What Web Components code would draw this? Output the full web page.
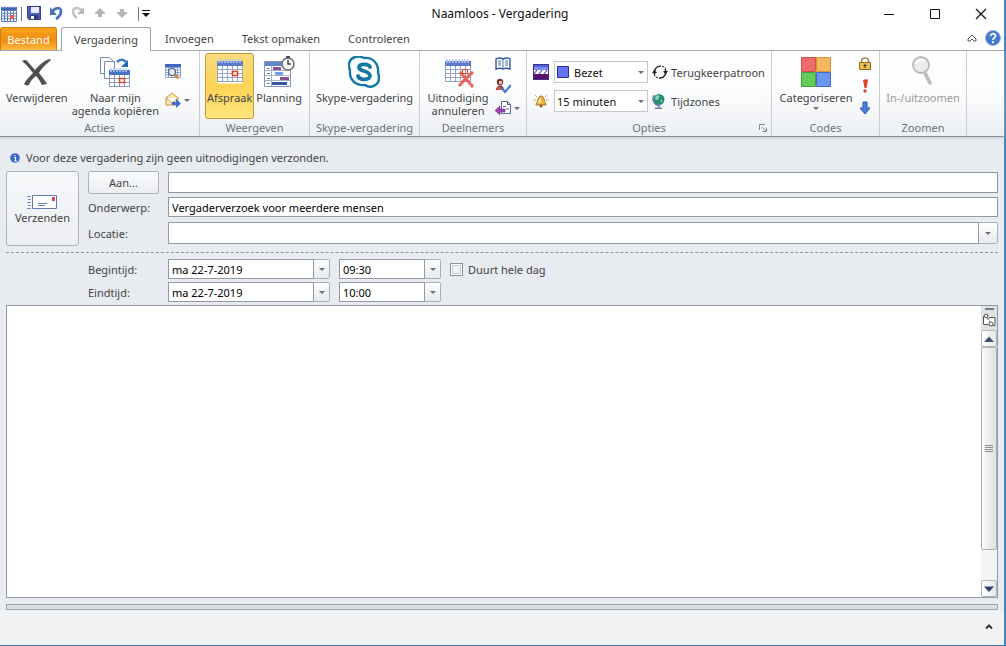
<!DOCTYPE html>
<html lang="nl">
<head>
<meta charset="utf-8">
<title>Naamloos - Vergadering</title>
<style>
html,body{margin:0;height:100%}
body{font:11px/13px "Noto Sans","Open Sans",sans-serif;color:#444;background:#e8ebf0}
</style>
</head>
<body>
<meeting-window></meeting-window>
<script>
const define = (tag, css, html, after) => {
  const t = document.createElement('template');
  t.innerHTML = `<style>*{box-sizing:border-box}button,input,select,textarea{font:inherit;color:inherit;margin:0}button{border:0;background:none;padding:0}${css}</style>${html}`;
  customElements.define(tag, class extends HTMLElement {
    constructor() {
      super();
      this.attachShadow({mode: 'open'}).append(t.content.cloneNode(true));
    }
    connectedCallback() { if (after) after.call(this, this.shadowRoot); }
  });
};

const grid = (x, y, w, h, cols, rows, c) => {
  let d = '';
  for (let i = 0; i <= cols; i++) d += `M${x + w * i / cols} ${y}v${h}`;
  for (let i = 0; i <= rows; i++) d += `M${x} ${y + h * i / rows}h${w}`;
  return `<path d="${d}" stroke="${c}" fill="none"/>`;
};
const calendar = `<g transform="translate(0 2)"><rect x="3.500" y="5.500" width="25" height="20" fill="#fff"/>${grid(3.5, 7.5, 25, 16, 5, 4, '#93a3cb')}<path d="M3 3h26v5H3z" fill="#5c7cca"/><path d="M5 1v4m3-4v4m3-4v4m3-4v4m3-4v4m3-4v4m3-4v4m3-4v4" stroke="#b7c8f3" stroke-width="1.500"/></g>`;
const icons = {
  app: [16, `<path d="M.5 2.500h15v13H.5z" fill="#fff"/>${grid(.5, 4.500, 15, 11, 5, 4, '#5f7db8')}<path d="M0 1h16v3H0z" fill="#3f65ae"/><path d="M2 0v2m3-2v2m3-2v2m3-2v2m3-2v2" stroke="#b9cdf3"/><path d="M9 9h4v4H9z" fill="#e66049"/>`],
  save: [16, `<path d="M1 1h14v14H3l-2-2z" fill="#4d5cb4"/><path d="M5 1h8v7H5z" fill="#e8eefb"/><path d="M4 10h8v5H4z" fill="#2f3a7a"/><path d="M5 11h3v4H5z" fill="#fff"/><path d="M1.500 1.500h13v13h-11l-2-2z" fill="none" stroke="#35428f"/>`],
  undo: [16, `<path d="M4 7C7 2 13 2 13 6c0 3-2 6-5 8" fill="none" stroke="#4a73bb" stroke-width="2.800"/><path d="M2 2v8h7z" fill="#4a73bb"/>`],
  redo: [16, `<path d="M12 6C9 2 3 2 3 6c0 3 1 5 4 7" fill="none" stroke="#c4c4c4" stroke-width="2.600"/><path d="M14 2v7H7z" fill="#b8b8b8"/>`],
  up: [16, `<path d="M8 3l6 6h-4v3H6V9H2z" fill="#b4b4b4"/>`],
  down: [16, `<path d="M8 13l6-6h-4V4H6v3H2z" fill="#b4b4b4"/>`],
  more: [10, `<path d="M1 2.500h8" stroke="#111"/><path d="M1 5h8L5 9z" fill="#111"/>`],
  minimize: [12, `<path d="M1 6.500h10" stroke="#111"/>`],
  maximize: [12, `<path d="M1.500 1.500h9v9h-9z" fill="none" stroke="#111"/>`],
  close: [12, `<path d="M1 1l10 10M11 1L1 11" stroke="#111" stroke-width="1.200"/>`],
  collapse: [10, `<path d="M1 5l4-4 4 4v2H7L5 5 3 7H1z" fill="#fff" stroke="#555"/>`],
  help: [16, `<circle cx="8" cy="8" r="7.500" fill="#4478cc" stroke="#8fb2ea"/><path d="M5.500 6.200C5.500 2.800 10.600 3 10.500 6c0 1.800-2.500 1.800-2.500 4" stroke="#fff" stroke-width="1.700" fill="none"/><circle cx="8" cy="12.200" r="1.100" fill="#fff"/>`],
  info: [10, `<circle cx="5" cy="5" r="4.800" fill="#3c6cc8"/><path d="M4 4.500h1.500V8M4 8h3M5 2v1.300" stroke="#fff" fill="none"/>`],
  arrow: [8, `<path d="M1 3h6L4 6z" fill="#6c6f75"/>`],
  remove: [32, `<path d="M1 5c3-2 5-1 6 1l7 8C19 8 24 4 29 3c1 0 1 1 0 2-5 4-9 8-11 12 3 4 6 7 8 11l-5 1c-2-4-4-7-6-9-4 3-6 6-7 9-2 1-4 0-5-1 2-4 6-8 9-11C8 12 5 8 1 5z" fill="#505053"/>`],
  copy: [32, `<path d="M1.500 1.500h9l3 3v13h-12z" fill="#fff" stroke="#7787b4"/><path d="M5.500 5.500h10v17h-10z" fill="#fff" stroke="#7787b4"/><path d="M18 6c3-3 7-3 9 0" fill="none" stroke="#3f78c6" stroke-width="2.500"/><path d="M29 4v7h-7z" fill="#2d62b4"/><path d="M10.500 14.500h20v17h-20z" fill="#fff"/>${grid(10.5, 18.5, 20, 12, 4, 3, '#8797c8')}<path d="M10 14h21v5H10z" fill="#4674c9"/><path d="M12 12v4m3-4v4m3-4v4m3-4v4m3-4v4m3-4v4" stroke="#b4cbf5" stroke-width="1.500"/><path d="M20.500 22.500h5v4h-5z" fill="#fff" stroke="#d94b2b" stroke-width="1.500"/>`],
  lookup: [16, `<path d="M.5 1.500h15v13H.5z" fill="#fff"/>${grid(.5, 4.500, 15, 10, 5, 4, '#8ba0d0')}<path d="M0 1h16v3H0z" fill="#3f66b8"/><circle cx="7" cy="9" r="3.500" fill="#d9ecfb" stroke="#4a5f86" stroke-width="1.200"/><path d="M9.500 11.500l4 4" stroke="#c98a3b" stroke-width="2.500"/>`],
  forward: [16, `<path d="M1 6l6-5 6 5v7H1z" fill="#fbe9b0" stroke="#c09545"/><path d="M3 6h8v3L7 11 3 9z" fill="#fff"/><path d="M1 6l6 5 6-5" fill="none" stroke="#c09545"/><path d="M7 10h4V7l5 4.500-5 4.500v-3H7z" fill="#3e6fd0"/>`],
  appointment: [32, calendar + `<path d="M18.500 15.500h5v4h-5z" fill="#fff" stroke="#e0401f" stroke-width="1.600"/>`],
  planning: [32, `<path d="M1.500 5.500h26v25h-26z" fill="#fff" stroke="#8796b8"/><path d="M2 6h25v4H2z" fill="#6183c8"/><path d="M2 14.500h25M2 19.500h25M2 24.500h25M8.500 10v20" stroke="#a4b2d0"/><path d="M4 12.500h3m-3 5h3m-3 5h3m-3 5h3" stroke="#6b82b8"/><path d="M10 11h8v3h-8zM17 21h9v3h-9z" fill="#8c4d96"/><path d="M12 16h8v3h-8z" fill="#6fa0e5"/><path d="M9 26h15v3H9z" fill="#3858a4"/><circle cx="25" cy="8" r="6" fill="#f7f8fa" stroke="#6c6e74" stroke-width="1.500"/><path d="M23 .8h4M25 1v2M25 4v4h3" stroke="#44464a" stroke-width="1.500" fill="none"/>`],
  skype: [32, `<path d="M16 2C10-1 2 1 1 8c-.3 2 0 4 1 6-1 10 6 16 15 15 6 4 14 0 14-7 0-2 0-3-1-5C31 8 25 1 16 2z" fill="#fff" stroke="#1478a5" stroke-width="2.400"/><path d="M22 11c-1-3-10-4-11 0-1 5 11 3 11 9-1 5-11 4-12 0" fill="none" stroke="#1478a5" stroke-width="3.800" stroke-linecap="round"/>`],
  cancel: [32, calendar + `<path d="M18 16l13 15M31 16c-5 4-10 9-14 14" stroke="#e85a48" stroke-width="3" fill="none" opacity=".9"/><path d="M20.500 13.500h5v4h-5z" fill="none" stroke="#e0401f"/>`],
  book: [16, `<path d="M1 3c3-2 5-1 7 0 2-1 4-2 7 0v10c-3-1-5-1-7 0-2-1-4-1-7 0z" fill="#fff" stroke="#35589a" stroke-width="1.400"/><path d="M8 3v10M3 5h3M3 7h3M3 9h3M10 5h3M10 7h3M10 9h3" stroke="#4a78b8"/>`],
  check: [16, `<circle cx="5" cy="4" r="3.200" fill="#7c323c"/><path d="M1 12c0-6 8-6 8 0z" fill="#63404f"/><path d="M4 3h3v3H4z" fill="#e7bf9e"/><path d="M2 9h4v3H2z" fill="#e04d43"/><path d="M7 10l3 4 6-7" stroke="#4f79cf" stroke-width="2.200" fill="none"/>`],
  reply: [16, `<path d="M6.500 1.500h6l3 3v9h-9z" fill="#fff" stroke="#5a6e9d"/><path d="M12.500 1.500v3h3M8 6.500h3M11 9h3" stroke="#495c8a" fill="none"/><path d="M0 10.500L5 6v3h5v3H5v3z" fill="#a043b1" stroke="#70317d" stroke-width=".6"/>`],
  status: [16, `<path d="M0 0h16v6H0z" fill="#4f62dc"/><path d="M0 3h16v3H0z" fill="#7d8cf0"/><path d="M0 6h16v4H0z" fill="#fff"/><path d="M1 10l3-4M6 10l3-4M11 10l3-4" stroke="#4b46b4" stroke-width="1.200"/><path d="M0 10h16v6H0z" fill="#5c1070"/><path d="M.5.500h15v15H.5z" fill="none" stroke="#403090"/>`],
  bell: [16, `<path d="M2 2l2 2M14 2l-2 2M0 7h3M16 7h-3" stroke="#e5ae5a"/><path d="M8 3c3.500 0 2.500 5 5 8v1H3v-1c2.500-3 1.500-8 5-8z" fill="#e9b23e" stroke="#a8772a"/><path d="M6 6c1-1 2-1 2 0v4H5z" fill="#fbe392"/><circle cx="8" cy="13" r="1.500" fill="#8d5a22"/>`],
  swatch: [12, `<path d="M.5.500h11v11H.5z" fill="#6672f2" stroke="#2a2c90"/>`],
  repeat: [16, `<path d="M3 11A6 6 0 0 1 9 2.200M7 14A6 6 0 0 0 13 5" fill="none" stroke="#222" stroke-width="1.400"/><path d="M10 2.300c2 .3 3.500 1.500 4 3M6 13.700c-2-.3-3.500-1.500-4-3" stroke="#222" stroke-dasharray="2 1" fill="none"/><path d="M11 7h5l-2.500 3.500zM0 9h5L2.500 5.500z" fill="#222"/>`],
  globe: [16, `<circle cx="7" cy="6.500" r="5.500" fill="#268d79"/><path d="M4 3c2-2 4 0 3 2s-2 3-4 1zM8 7c2-1 3 1 2 3z" fill="#8fd4ae"/><path d="M2 2C-1 7 3 13 8 12.500M7 13v2M3 15.300h7" stroke="#7777a8" stroke-width="1.400" fill="none"/>`],
  launcher: [8, `<path d="M.5 6V.5H6M3 3l4 4M7.500 3.500v4h-4" fill="none" stroke="#838791"/>`],
  categories: [32, `<path d="M1.500 1.500h14v14h-14z" fill="#f06c6c" stroke="#cf4f4c"/><path d="M16.500 1.500h14v14h-14z" fill="#f6b65c" stroke="#d18f3a"/><path d="M1.500 16.500h14v14h-14z" fill="#64cc58" stroke="#41a044"/><path d="M16.500 16.500h14v14h-14z" fill="#6c96ee" stroke="#4569c0"/>`],
  lock: [16, `<path d="M4.500 8V5c0-4 7-4 7 0v3" fill="none" stroke="#a58a50" stroke-width="1.600"/><path d="M2.500 6.500h11v7h-11z" fill="#e9bf50" stroke="#8f6a25"/><path d="M8 8v4M6.500 9.500h3" stroke="#3d3015"/>`],
  high: [16, `<path d="M6 2c2-1 4-1 5 0L9.500 10h-2z" fill="#df4229"/><circle cx="8" cy="13" r="1.700" fill="#df4229"/>`],
  low: [16, `<path d="M6 2h4v6h3l-5 6-5-6h3z" fill="#4780df" stroke="#2b58a8"/>`],
  zoom: [32, `<circle cx="14" cy="9" r="8" fill="#ececec" stroke="#b8b8b8" stroke-width="1.800"/><path d="M9 8c1-4 5-5 8-3" stroke="#fff" stroke-width="2" fill="none"/><path d="M18 17l5 10" stroke="#bdbdbd" stroke-width="3.600" stroke-linecap="round"/>`],
  envelope: [32, `<path d="M5.500 9.500h24v13h-24z" fill="#fff" stroke="#6478ac"/><path d="M25 11h3v4h-3z" fill="#d5455c"/><path d="M11 17.500h9M11 19.500h7M0 10.500h4M1 13.500h3M0 16.500h4M1 19.500h3M0 22.500h4" stroke="#7087bb"/>`],
  jump: [14, `<path d="M3.500 3.500l3 2 1.500-1h5v8h-3l-5-1H1.500v-8z" fill="#fff" stroke="#555"/><path d="M4 4l5 6" stroke="#555" stroke-dasharray="1.500 1"/><circle cx="4" cy="3" r="1.800" fill="#fff" stroke="#555"/><circle cx="9" cy="11" r="2" fill="#fff" stroke="#555"/>`],
  scrollup: [12, `<path d="M1 9h10L6 3.500z" fill="#45506b"/>`],
  scrolldown: [12, `<path d="M1 3.500h10L6 9z" fill="#303f63"/>`],
  chevron: [10, `<path d="M2 6.500L5 3.500l3 3" stroke="#333" stroke-width="2" fill="none"/>`]
};
define('ui-icon', ':host{display:inline-flex;flex:none}svg{display:block}', '<span></span>', function (r) {
  const [s, body] = icons[this.getAttribute('name')];
  r.querySelector('span').innerHTML = `<svg width="${s}" height="${s}" viewBox="0 0 ${s} ${s}" aria-hidden="true">${body}</svg>`;
});

define('title-bar', `
:host{display:grid;grid-template-columns:1fr auto 1fr;height:27px;background:#fff;color:#111;align-items:center}
.quick{display:flex;align-items:center;gap:6px;padding-left:1px}
.quick i{width:1px;height:14px;background:#777}
.quick i.first{margin:0 -2px 0 -2px}
.quick i.last{margin:0 -4px 0 2px}
h1{font:inherit;font-size:var(--title);margin:0 4px 0 0}
.win{display:flex;justify-content:flex-end}
.win button{width:46px;height:27px;display:grid;place-items:center}`, `
<div class="quick"><ui-icon name="app"></ui-icon><i class="first"></i>
<button aria-label="Opslaan"><ui-icon name="save"></ui-icon></button><button aria-label="Ongedaan maken"><ui-icon name="undo"></ui-icon></button><button aria-label="Opnieuw"><ui-icon name="redo"></ui-icon></button><button aria-label="Vorige"><ui-icon name="up"></ui-icon></button><button aria-label="Volgende"><ui-icon name="down"></ui-icon></button><i class="last"></i><button aria-label="Werkbalk aanpassen"><ui-icon name="more"></ui-icon></button></div>
<h1>Naamloos - Vergadering</h1>
<div class="win"><button aria-label="Minimaliseren"><ui-icon name="minimize"></ui-icon></button><button aria-label="Maximaliseren"><ui-icon name="maximize"></ui-icon></button><button aria-label="Sluiten"><ui-icon name="close"></ui-icon></button></div>`);

define('ribbon-tabs', `
:host{display:flex;height:24px;background:#fff;box-shadow:inset 0 -1px #9da2aa}
button{padding:0 14px;height:23px}
.file{width:57px;padding:0;color:#fff;background:linear-gradient(#f9a51c,#f08c10 55%,#fdbb3f);border:1px solid #c9800f;border-bottom:0;border-radius:3px 3px 0 0;margin-right:4px}
.on{width:90px;height:24px;padding:0;background:#fff;border:1px solid #9da2aa;border-bottom:0;border-radius:3px 3px 0 0}
.end{margin-left:auto;display:flex;align-items:center;gap:8px;padding-right:3px}
.end button{padding:0;height:auto}`, `
<button class="file">Bestand</button><button class="on">Vergadering</button><button>Invoegen</button><button>Tekst opmaken</button><button>Controleren</button>
<div class="end"><button aria-label="Lint minimaliseren"><ui-icon name="collapse"></ui-icon></button><button aria-label="Help"><ui-icon name="help"></ui-icon></button></div>`);

define('ribbon-group', `
:host{display:flex;flex-direction:column;border-right:1px solid #c9cdd3;flex:0 0 auto}
.items{display:flex;flex:1;justify-content:center;padding-top:2px}
footer{display:grid;grid-template-columns:1fr auto 1fr;height:17px;line-height:17px;color:#6b717b}
footer span{grid-column:2}
::slotted([slot=launcher]){grid-column:3;justify-self:end;align-self:center;margin-right:4px}`, `
<div class="items"><slot></slot></div><footer><span></span><slot name="launcher"></slot></footer>`, function (r) {
  r.querySelector('span').textContent = this.getAttribute('label');
});

define('big-button', `
:host{display:block}
button{height:66px;min-width:100%;border:1px solid transparent;border-radius:3px;padding:2px 1px 0;display:flex;flex-direction:column;align-items:center;gap:3px;white-space:pre-line}
:host([active]) button{background:linear-gradient(#fbdc7c,#fdd356 50%,#ffe57e);border-color:#c29a3a}
:host([disabled]) button{color:#9a9a9a}
.menu{display:none;margin-top:-3px}
:host([menu]) .menu{display:inline-flex}`, `
<button><ui-icon-slot></ui-icon-slot><slot></slot><ui-icon class="menu" name="arrow"></ui-icon></button>`, function (r) {
  const i = document.createElement('ui-icon');
  i.setAttribute('name', this.getAttribute('icon'));
  r.querySelector('ui-icon-slot').replaceWith(i);
  r.querySelector('button').disabled = this.hasAttribute('disabled');
});

define('small-button', `
:host{display:block}
button{display:flex;align-items:center;gap:3px;white-space:nowrap}
.i{display:flex}
.menu{display:none}:host([menu]) .menu{display:inline-flex;margin-left:-1px}`, `
<button><span class="i"></span><slot></slot><ui-icon class="menu" name="arrow"></ui-icon></button>`, function (r) {
  r.querySelector('.i').innerHTML = `<ui-icon name="${this.getAttribute('icon')}"></ui-icon>`;
  if (this.title) r.querySelector('button').setAttribute('aria-label', this.title);
});

define('ribbon-select', `
:host{display:flex;align-items:center;gap:5px}
label{display:flex}
.box{display:grid;width:94px;height:22px;align-items:center;color:#111}
.box>*{grid-area:1/1}
select{appearance:none;width:100%;height:22px;background:#fff;border:1px solid #c3c7ce;border-radius:0;padding:0 14px 0 2px}
:host([swatch]) select{padding-left:19px}
.arrow{justify-self:end;margin-right:3px;pointer-events:none}
.sw{display:none;margin-left:3px;pointer-events:none}
:host([swatch]) .sw{display:inline-flex}`, `
<label for="s"></label><div class="box"><select id="s"><option></option></select><ui-icon class="sw" name="swatch"></ui-icon><ui-icon class="arrow" name="arrow"></ui-icon></div>`, function (r) {
  r.querySelector('label').innerHTML = `<ui-icon name="${this.getAttribute('icon')}"></ui-icon>`;
  r.querySelector('select').setAttribute('aria-label', this.getAttribute('label'));
  r.querySelector('option').textContent = this.getAttribute('value');
});

define('meeting-ribbon', `
:host{display:flex;height:86px;background:linear-gradient(#fff,#fbfcfd 50%,#eceff3);border-bottom:1px solid #8e939b;box-shadow:0 1px 2px #c3c8d0}
.col{display:flex;flex-direction:column}
.acts{gap:13px;padding:10px 4px 0 4px}
.people{gap:6px;padding:3px 0 0 4px}
.codes{gap:6px;padding:3px 0 0 3px}
.opts{gap:7px;padding-top:8px}
.opts.r{gap:13px;padding:11px 0 0 4px}
.a{width:200px}.w{width:110px}.d{width:107px}.o{width:245px}.c{width:108px}.z{width:87px}`, `
<ribbon-group class="a" label="Acties"><big-button icon="remove">Verwijderen</big-button><big-button icon="copy">Naar mijn
agenda kopiëren</big-button><div class="col acts"><small-button icon="lookup" title="Agenda"></small-button><small-button icon="forward" menu title="Doorsturen"></small-button></div></ribbon-group>
<ribbon-group class="w" label="Weergeven"><big-button icon="appointment" active>Afspraak</big-button><big-button icon="planning">Planning</big-button></ribbon-group>
<ribbon-group class="w" label="Skype-vergadering"><big-button icon="skype">Skype-vergadering</big-button></ribbon-group>
<ribbon-group class="d" label="Deelnemers"><big-button icon="cancel">Uitnodiging
annuleren</big-button><div class="col people"><small-button icon="book" title="Adresboek"></small-button><small-button icon="check" title="Namen controleren"></small-button><small-button icon="reply" menu title="Antwoordopties"></small-button></div></ribbon-group>
<ribbon-group class="o" label="Opties"><div class="col opts"><ribbon-select icon="status" swatch label="Weergeven als" value="Bezet"></ribbon-select><ribbon-select icon="bell" label="Herinnering" value="15 minuten"></ribbon-select></div><div class="col opts r"><small-button icon="repeat">Terugkeerpatroon</small-button><small-button icon="globe">Tijdzones</small-button></div><ui-icon slot="launcher" name="launcher"></ui-icon></ribbon-group>
<ribbon-group class="c" label="Codes"><big-button icon="categories" menu>Categoriseren</big-button><div class="col codes"><small-button icon="lock" title="Privé"></small-button><small-button icon="high" title="Hoge urgentie"></small-button><small-button icon="low" title="Lage urgentie"></small-button></div></ribbon-group>
<ribbon-group class="z" label="Zoomen"><big-button icon="zoom" disabled>In-/uitzoomen</big-button></ribbon-group>`);

define('text-field', `
:host{display:flex;align-items:center}
label{width:80px;flex:none}
:host([bare]) label{display:none}
input{flex:1;min-width:0;height:100%;border:1px solid #9299a3;border-radius:0;background:#fff;color:#000;padding:0 3px;outline:0}
button{display:none;width:20px;height:100%;margin-left:-1px;border:1px solid #a9afba;border-left-color:#9299a3;border-radius:0 2px 2px 0;background:linear-gradient(#fff,#e6e9ee);place-items:center}
:host([drop]) button{display:grid}
:host([narrow]) button{width:17px}`, `
<label for="f"></label><input id="f" type="text"><button aria-label="Lijst openen"><ui-icon name="arrow"></ui-icon></button>`, function (r) {
  r.querySelector('label').textContent = this.getAttribute('label');
  r.querySelector('input').value = this.getAttribute('value') || '';
});

define('meeting-form', `
:host{display:block;padding:14px 6px 0}
.info{display:flex;align-items:center;gap:6px;padding-left:4px;margin:0 0 7px}
.head{display:grid;grid-template-columns:73px 1fr;gap:9px;padding-bottom:6px;border-bottom:1px dashed #8d929a}
.send{height:75px;border:1px solid #aeb3bc;border-radius:3px;background:linear-gradient(#f7f8fa,#eceef2);display:flex;flex-direction:column;align-items:center;justify-content:center;gap:1px}
.send ui-icon{margin:-8px 0}
.rows{display:flex;flex-direction:column}
.to{display:flex;gap:9px;align-items:center}
.to button{width:71px;height:23px;border:1px solid #aeb3bc;border-radius:2px;background:linear-gradient(#fafbfc,#eceef2)}
.to text-field{flex:1;height:21px}
.sub{height:20px;margin-top:3px}.loc{height:22px;margin-top:5px}
.times{display:grid;grid-template-columns:242px 102px auto;column-gap:9px;row-gap:3px;padding:6px 0 3px 82px;justify-content:start}
.times text-field{height:20px}
.all{display:flex;align-items:center;gap:5px}
.all input{appearance:none;width:13px;height:13px;border:1px solid #8b919b;background:#f1f2f4;box-shadow:inset 0 0 0 1px #fff,inset 0 0 0 2px #c9ccd2}`, `
<p class="info"><ui-icon name="info"></ui-icon>Voor deze vergadering zijn geen uitnodigingen verzonden.</p>
<div class="head"><button class="send"><ui-icon name="envelope"></ui-icon>Verzenden</button>
<div class="rows"><div class="to"><button>Aan...</button><text-field bare label="Aan"></text-field></div>
<text-field class="sub" label="Onderwerp:" value="Vergaderverzoek voor meerdere mensen"></text-field>
<text-field class="loc" drop label="Locatie:"></text-field></div></div>
<div class="times"><text-field drop narrow label="Begintijd:" value="ma 22-7-2019"></text-field><text-field drop narrow bare label="Begintijd, uur" value="09:30"></text-field><label class="all"><input type="checkbox">Duurt hele dag</label>
<text-field drop narrow label="Eindtijd:" value="ma 22-7-2019"></text-field><text-field drop narrow bare label="Eindtijd, uur" value="10:00"></text-field></div>`);

define('message-editor', `
:host{display:flex;border:1px solid #9299a3;background:#fff;margin:0 6px}
textarea{flex:1;border:0;resize:none;outline:0;padding:6px;background:#fff}
.bar{width:16px;display:flex;flex-direction:column;background:#f3f4f6}
.top{height:24px;background:#dfe2e7;display:flex;flex-direction:column;align-items:center;gap:3px;padding-top:2px}
.top i{width:9px;height:2px;background:#747b87}
button{height:17px;border:1px solid #b3b7be;border-radius:2px;background:linear-gradient(90deg,#fff,#e4e6ea);display:grid;place-items:center}
.track{flex:1;display:flex;flex-direction:column}
.thumb{height:87%;border:1px solid #a9adb5;border-radius:2px;background:linear-gradient(90deg,#fafafa,#dddfe3);display:grid;place-content:center;gap:1px}
.thumb i{width:8px;height:1px;background:#888d96}`, `
<textarea aria-label="Bericht"></textarea>
<div class="bar"><div class="top"><i></i><ui-icon name="jump"></ui-icon></div><button aria-label="Omhoog"><ui-icon name="scrollup"></ui-icon></button><div class="track"><div class="thumb"><i></i><i></i><i></i><i></i></div></div><button aria-label="Omlaag"><ui-icon name="scrolldown"></ui-icon></button></div>`);

define('people-pane', `
:host{display:block;padding-top:6px}
.split{height:6px;margin:0 6px;border:1px solid #a0a6b0;background:#d9dce1}
.pane{height:35px;background:#f1f2f3;display:flex;justify-content:flex-end;align-items:center;padding-right:10px}`, `
<div class="split"></div><div class="pane"><button aria-label="Personenvenster uitvouwen"><ui-icon name="chevron"></ui-icon></button></div>`);

define('meeting-window', `
:host{display:flex;flex-direction:column;min-height:100vh;box-sizing:border-box;border-right:2px solid #3b8ac6;border-bottom:1px solid #3975ad;--title:12px}
message-editor{flex:1}`, `
<title-bar></title-bar><ribbon-tabs></ribbon-tabs><meeting-ribbon></meeting-ribbon><meeting-form></meeting-form><message-editor></message-editor><people-pane></people-pane>`);
</script>
</body>
</html>
